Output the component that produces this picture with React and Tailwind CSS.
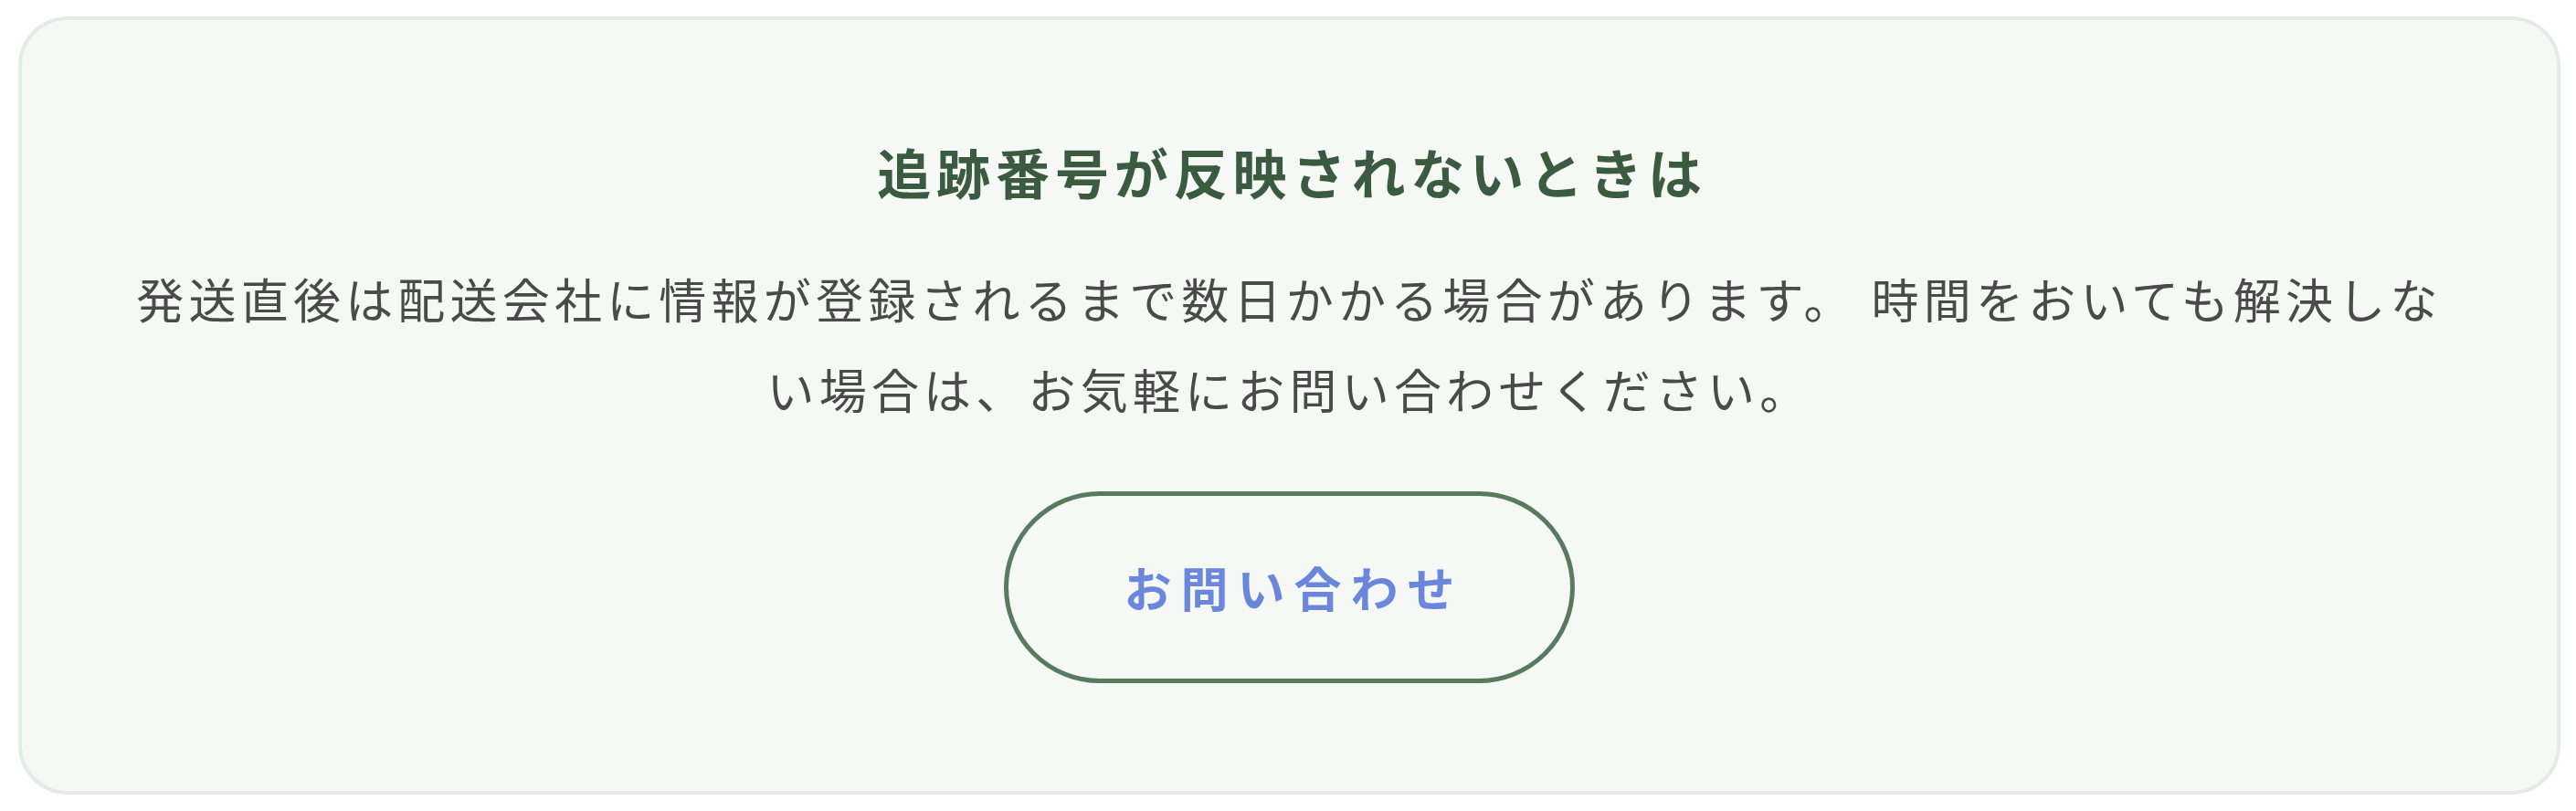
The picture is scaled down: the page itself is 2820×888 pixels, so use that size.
export default function App() {
    return (
        <main className="w-[2820px] h-[888px] bg-white pt-[18px] pl-[20px]" style={{ fontFamily: '"Noto Sans CJK JP", "Noto Sans", sans-serif' }}>
            <section className="w-[2783px] h-[852px] rounded-[54px] border-[4px] border-[#e4ebe6] bg-[#f6f8f6] pt-[136px] flex flex-col items-center">
                {/* Heading */}
                <h2 className="h-[59px] pl-[6px] text-[59px] leading-none font-bold tracking-[5.9px] text-[#3b5b41] whitespace-nowrap">
                    追跡番号が反映されないときは
                </h2>

                {/* Description */}
                <p className="mt-[60px] w-[2560px] text-center text-[52px] leading-[99px] tracking-[5.2px] text-[#4a4a4a]">
                    発送直後は配送会社に情報が登録されるまで数日かかる場合があります。 時間をおいても解決しない場合は、お気軽にお問い合わせください。
                </p>

                {/* Contact button */}
                <button className="mt-[63px] w-[625px] h-[210px] shrink-0 rounded-full border-[5px] border-[#587a5e] bg-transparent flex items-center justify-center pl-[10px]">
                    <span className="text-[52px] leading-none font-bold tracking-[10px] text-[#6a87dc]">
                        お問い合わせ
                    </span>
                </button>
            </section>
        </main>
    )
}
